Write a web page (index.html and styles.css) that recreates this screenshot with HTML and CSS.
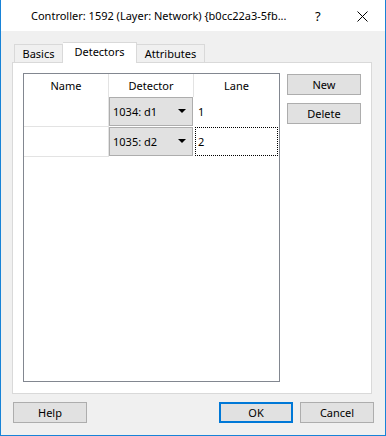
FILE: index.html
```html
<!DOCTYPE html>
<html>
<head>
<meta charset="utf-8">
<link rel="stylesheet" href="styles.css">
</head>
<body>
<div class="window">
  <div class="titlebar">
    <span class="title">Controller: 1592 (Layer: Network) {b0cc22a3-5fb...</span>
    <span class="help">?</span>
    <span class="close"><svg width="11" height="11" viewBox="0 0 11 11"><path d="M0.5 0.5 L10.5 10.5 M10.5 0.5 L0.5 10.5" stroke="#000" stroke-width="1" fill="none"/></svg></span>
  </div>
  <div class="content">
    <div class="tabs">
      <div class="tab basics">Basics</div>
      <div class="tab active detectors">Detectors</div>
      <div class="tab attributes">Attributes</div>
    </div>
    <div class="panel">
      <div class="grid">
        <div class="row header">
          <div class="cell name">Name</div>
          <div class="cell det">Detector</div>
          <div class="cell lane">Lane</div>
        </div>
        <div class="row data">
          <div class="cell name"></div>
          <div class="cell det"><div class="combo"><span>1034: d1</span><span class="arrow"></span></div></div>
          <div class="cell lane"><span class="lanetext">1</span></div>
        </div>
        <div class="row data">
          <div class="cell name"></div>
          <div class="cell det"><div class="combo"><span>1035: d2</span><span class="arrow"></span></div></div>
          <div class="cell lane"><span class="lanetext focus">2</span></div>
        </div>
      </div>
      <div class="side">
        <div class="btn">New</div>
        <div class="btn">Delete</div>
      </div>
    </div>
    <div class="footer">
      <div class="btn help-btn">Help</div>
      <div class="spacer"></div>
      <div class="btn ok">OK</div>
      <div class="btn">Cancel</div>
    </div>
  </div>
</div>
</body>
</html>
```
FILE: styles.css
```css
* { box-sizing: border-box; }
html, body { margin: 0; padding: 0; }
body {
  font-family: "Noto Sans", "Open Sans", sans-serif;
  font-size: 11px;
  color: #000;
  background: #f0f0f0;
}
.window {
  width: 386px;
  height: 436px;
  border: 1px solid #1883d7;
  border-top: none;
  background: #f0f0f0;
  display: flex;
  flex-direction: column;
}
.titlebar {
  height: 31px;
  background: #fff;
  display: flex;
  align-items: center;
  flex-shrink: 0;
  padding-left: 30px;
}
.title {
  width: 284px;
  flex: none;
  white-space: nowrap;
  overflow: hidden;
  font-size: 11px;
  line-height: 14px;
}
.help {
  width: 12px;
  flex: none;
  font-size: 13px;
  line-height: 14px;
}
.close {
  margin-left: 30px;
  display: flex;
  margin-top: 1px;
}
.content {
  padding: 11px 11px 0 11px;
  display: flex;
  flex-direction: column;
}
.tabs {
  display: flex;
  align-items: flex-end;
  height: 20px;
  padding-left: 2px;
  position: relative;
  z-index: 1;
}
.tab {
  height: 18px;
  border: 1px solid #d9d9d9;
  border-bottom: none;
  background: #f0f0f0;
  display: flex;
  align-items: center;
  justify-content: center;
  line-height: 14px;
}
.tab.basics { width: 49px; }
.tab.detectors { width: 74px; }
.tab.attributes { width: 68px; border-left: none; }
.tab.active {
  height: 21px;
  background: #fff;
  margin-bottom: -1px;
  padding-bottom: 3px;
  border-left: none;
}
.panel {
  width: 360px;
  height: 332px;
  border: 1px solid #d9d9d9;
  background: #fff;
  padding: 10px;
  display: flex;
  align-items: flex-start;
}
.grid {
  width: 257px;
  height: 309px;
  border: 1px solid #828790;
  background: #fff;
  display: flex;
  flex-direction: column;
}
.row {
  display: grid;
  grid-template-columns: 85px 85px 85px;
}
.row.header { height: 23px; }
.row.data { height: 30px; }
.cell {
  display: flex;
  align-items: center;
}
.header .cell {
  justify-content: center;
  line-height: 14px;
  padding-top: 1px;
}
.header .name, .header .det { border-right: 1px solid #e3e3e3; }
.data .name { border-right: 1px solid #e3e3e3; border-bottom: 1px solid #e3e3e3; }
.data .det { border-right: 1px solid #fff; border-bottom: 1px solid #fff; align-items: stretch; }
.data .lane { border-bottom: 1px solid #fff; align-items: stretch; padding: 0 1px 0 1px; }
.combo {
  flex: 1;
  background: #e1e1e1;
  border: 1px solid #adadad;
  display: flex;
  align-items: center;
  justify-content: space-between;
  padding: 0 6px 0 3px;
  line-height: 14px;
}
.arrow {
  width: 0;
  height: 0;
  border-left: 4px solid transparent;
  border-right: 4px solid transparent;
  border-top: 4px solid #000;
  margin-top: -1px;
}
.lanetext {
  flex: 1;
  display: flex;
  align-items: center;
  padding-left: 2px;
  line-height: 14px;
  border: 1px solid transparent;
}
.lanetext.focus {
  border: 1px dotted #000;
}
.side {
  margin-left: 7px;
  margin-top: 1px;
  display: flex;
  flex-direction: column;
  gap: 8px;
}
.btn {
  width: 74px;
  height: 21px;
  background: #e1e1e1;
  border: 1px solid #adadad;
  display: flex;
  align-items: center;
  justify-content: center;
  line-height: 14px;
}
.footer {
  margin-top: 8px;
  display: flex;
  gap: 7px;
}
.help-btn { margin-left: 1px; }
.spacer { flex: 1; }
.btn.ok { border: 2px solid #0078d7; }
```
